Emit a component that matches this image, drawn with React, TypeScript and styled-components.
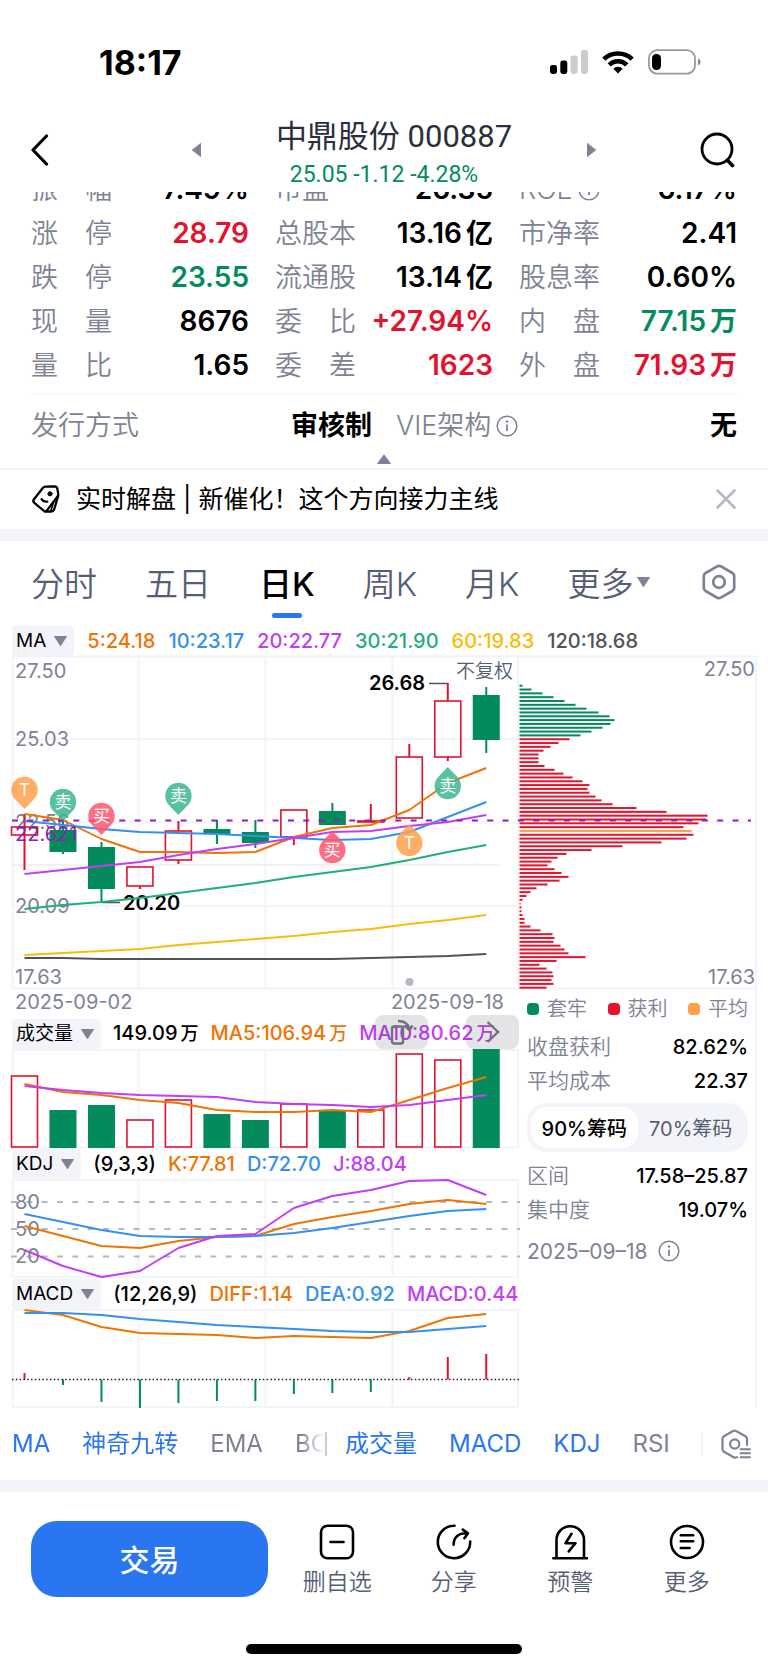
import React, { useState } from "react";
import styled, { createGlobalStyle, css } from "styled-components";

const c = {
  ink: "#000000",
  title: "#29303b",
  label: "#7e8394",
  slate: "#565e76",
  mute: "#b3b8c8",
  line: "#f3f4f9",
  red: "#e3122d",
  green: "#038b5d",
  blue: "#2a75f0",
  orange: "#ef7404",
  sky: "#3590ef",
  purple: "#c23df5",
  teal: "#1fae7c",
  yellow: "#f8bd0a",
  dark: "#525257",
  amber: "#ffa04a",
  violet: "#8c22b4",
};

const GlobalStyle = createGlobalStyle`
  *, *::before, *::after { box-sizing: border-box; }
  body {
    margin: 0;
    background: #fff;
    color: ${c.ink};
    font-family: Inter, "Noto Sans CJK SC", sans-serif;
  }
  button, select, input { font: inherit; color: inherit; }
  button { border: 0; padding: 0; background: none; }
  svg { display: block; flex: none; }
`;

/* ---------- icons ---------- */

const SignalIcon = () => (
  <svg width="38" height="26" viewBox="0 0 38 26">
    <rect x="0" y="16" width="7" height="9" rx="2.4" />
    <rect x="10.3" y="11.5" width="7" height="13.5" rx="2.4" />
    <rect x="20.6" y="6.500" width="7" height="18.5" rx="2.4" fill="#ccc" />
    <rect x="31" y="1" width="7" height="24" rx="2.4" fill="#ccc" />
  </svg>
);

const WifiIcon = () => (
  <svg width="32" height="26" viewBox="0 0 32 26" fill="none" stroke="#000" strokeWidth="4.6">
    <path d="M1.8 10.2a20.4 20.4 0 0 1 28.4 0" />
    <path d="M7.2 15.9a12.6 12.6 0 0 1 17.6 0" />
    <path d="M16 24.6l-4.6-4.9a6.6 6.6 0 0 1 9.2 0z" fill="#000" stroke="none" />
  </svg>
);

const BatteryIcon = () => (
  <svg width="53" height="26" viewBox="0 0 53 26">
    <rect x="1" y="1.2" width="46" height="23.4" rx="8" fill="none" stroke="#9a9a9a" strokeWidth="1.8" />
    <rect x="4" y="5" width="9" height="16" rx="4.2" />
    <path d="M50 9.6c3.4 1.2 3.4 5.600 0 6.800z" fill="#8a8a8a" />
  </svg>
);

const BackIcon = () => (
  <svg width="18" height="32" viewBox="0 0 18 32" fill="none" stroke="#000" strokeWidth="3.2" strokeLinecap="round" strokeLinejoin="round">
    <path d="M15.500 2L2 16l13.500 14" />
  </svg>
);

const SearchIcon = () => (
  <svg width="35" height="36" viewBox="0 0 35 36" fill="none" stroke="#000" strokeWidth="2.800" strokeLinecap="round">
    <circle cx="17" cy="17" r="15" />
    <path d="M27.500 28.500l5 5" strokeWidth="3.600" />
  </svg>
);

const Triangle = ({ dir, w, h }: { dir: "up" | "down" | "left" | "right"; w: number; h: number }) => {
  const d = {
    up: `M${w / 2} 0.500L${w} ${h}H0z`,
    down: `M0 0H${w}L${w / 2} ${h}z`,
    left: `M${w} 0V${h}L0 ${h / 2}z`,
    right: `M0 0V${h}L${w} ${h / 2}z`,
  }[dir];
  return (
    <svg width={w} height={h} viewBox={`0 0 ${w} ${h}`}>
      <path d={d} fill={c.label} stroke={c.label} strokeWidth="0.500" strokeLinejoin="round" />
    </svg>
  );
};

const InfoIcon = ({ size }: { size: number }) => (
  <svg width={size} height={size} viewBox="0 0 22 22" fill="none" stroke={c.label} strokeWidth="1.500">
    <circle cx="11" cy="11" r="9.800" />
    <path d="M11 9.500v6.500" strokeWidth="1.800" />
    <circle cx="11" cy="6.500" r="1.200" fill={c.label} stroke="none" />
  </svg>
);

const TagIcon = () => (
  <svg width="28" height="28" viewBox="0 0 28 28" fill="none" stroke="#000" strokeWidth="2.300" strokeLinejoin="round" strokeLinecap="round">
    <path d="M1.800 14.500L10.600 3.200Q11.800 1.700 13.800 1.600L22.600 1.300Q24.800 1.300 25.300 3.400L26.200 8.600Q26.500 10.500 25.200 12L14.800 25.600Q13.400 27 11.900 25.800L2.300 17.800Q0.600 16.200 1.800 14.500z" />
    <path d="M26.200 11L22.300 23.800Q21.500 26.400 18.800 26.500L13.500 26.600" />
    <path d="M18.800 26l2.600-8.500" strokeWidth="1.600" />
    <circle cx="18" cy="8.800" r="2.100" fill="#000" strokeWidth="1" />
    <path d="M9.600 14.200q1.800 3 5.600 2.400" />
  </svg>
);

const CloseIcon = () => (
  <svg width="20" height="20" viewBox="0 0 20 20" stroke={c.mute} strokeWidth="2.600" strokeLinecap="round">
    <path d="M1.500 1.500l17 17M18.500 1.500l-17 17" />
  </svg>
);

const HexIcon = () => (
  <svg width="34" height="36" viewBox="0 0 34 36" fill="none" stroke={c.label} strokeWidth="2.700" strokeLinejoin="round">
    <path d="M15.200 2.300q1.800-1 3.600 0L30.400 9q1.800 1 1.800 3v12q0 2-1.800 3l-11.600 6.700q-1.800 1-3.600 0L3.600 27q-1.800-1-1.800-3V12q0-2 1.800-3z" />
    <circle cx="17" cy="18" r="5.800" />
  </svg>
);

const HexListIcon = () => (
  <svg width="30" height="30" viewBox="0 0 30 30" fill="none" stroke={c.label} strokeWidth="2.200" strokeLinejoin="round" strokeLinecap="round">
    <path d="M16 28.200l-2.500.600L3 22.800q-1.500-.900-1.500-2.600V9.800Q1.500 8 3 7.200L12 2q1.500-.800 3 0l9.500 5.200Q26 8 26 9.800V16" />
    <circle cx="13.700" cy="15" r="4.600" />
    <path d="M19.500 20.200h9.500M19.500 24.200h9.500M19.500 28.200h9.500" strokeWidth="1.900" />
  </svg>
);

const RotateIcon = () => (
  <svg width="24" height="28" viewBox="0 0 24 28" fill="none" stroke="#707278" strokeWidth="2.400" strokeLinejoin="round">
    <rect x="2" y="8.500" width="11" height="17" rx="2" />
    <path d="M8 3q9.500 0 11.500 8M15.500 8.500l4 3.500 3-4.500" />
  </svg>
);

const ArrowIcon = () => (
  <svg width="14" height="24" viewBox="0 0 14 24" fill="none" stroke="#707278" strokeWidth="2.400">
    <path d="M1.500 2l10.500 10L1.500 22" />
  </svg>
);

const ActionSvg = ({ children }: { children: React.ReactNode }) => (
  <svg width="36" height="36" viewBox="0 0 36 36" fill="none" stroke="#000" strokeWidth="2.600" strokeLinecap="round" strokeLinejoin="round">
    {children}
  </svg>
);

const RemoveIcon = () => (
  <ActionSvg>
    <rect x="2" y="1.800" width="32" height="32.400" rx="6.500" />
    <path d="M11.500 18h13" />
  </ActionSvg>
);

const ShareIcon = () => (
  <ActionSvg>
    <path d="M18.500 1.800A16.200 16.200 0 1 0 34.200 17.600" />
    <path d="M17.600 20.800c0-8 5-11.800 13.400-11.600M26.800 5.600l5.200 3.600-3.600 5" />
  </ActionSvg>
);

const AlertIcon = () => (
  <ActionSvg>
    <path d="M4.500 33.500V16a13.500 13.500 0 0 1 27.500 0v17.500M1.300 34.200h34" />
    <path d="M19.500 9.800l-6 9.400h10l-6.800 8.200" />
  </ActionSvg>
);

const MoreIcon = () => (
  <ActionSvg>
    <circle cx="18" cy="18" r="16" />
    <path d="M11.800 11.300h12.400M11.800 17.300h12.400M11.800 24h8.800" />
  </ActionSvg>
);

/* ---------- top of the page ---------- */

const Page = styled.main`
  width: 100%;
  background: #fff;
`;

const StatusBar = styled.div`
  display: flex;
  align-items: center;
  justify-content: space-between;
  height: 110px;
  padding: 14px 67px 0 99px;
`;

const Clock = styled.time`
  font-size: 34px;
  font-weight: 700;
`;

const StatusIcons = styled.div`
  display: flex;
  gap: 14px;
`;

const Header = styled.header`
  display: grid;
  grid-template-columns: 161fr 404fr 139fr;
  grid-template-rows: 80px;
  align-items: center;
  height: 82px;
  padding: 0 33px 0 31px;
`;

const IconButton = styled.button<{ $end?: boolean }>`
  display: flex;
  align-items: center;
  justify-self: ${(p) => (p.$end ? "end" : "start")};
`;

const Pager = styled.div`
  display: flex;
  align-items: center;
  justify-content: space-between;
`;

const StockTitle = styled.div`
  padding-top: 10px;
  text-align: center;
  font-family: Roboto, "Noto Sans CJK SC", sans-serif;
`;

const StockName = styled.h1`
  margin: 0 0 2px;
  font-size: 31px;
  line-height: 38px;
  font-weight: 400;
  color: ${c.title};
`;

const StockPrice = styled.p`
  margin: 0;
  padding-right: 20px;
  font-size: 23px;
  line-height: 34px;
  color: ${c.green};
`;

const QuoteClip = styled.section`
  overflow: hidden;
  padding: 0 31px;
`;

const QuoteGrid = styled.dl`
  display: grid;
  grid-template-columns: repeat(3, minmax(0, 1fr));
  column-gap: 26px;
  margin: -25px 0 7px;
`;

const Quote = styled.div`
  display: flex;
  align-items: baseline;
  justify-content: space-between;
  height: 44px;
  line-height: 44px;
  white-space: nowrap;
`;

const QuoteLabel = styled.dt`
  display: flex;
  justify-content: space-between;
  min-width: 81px;
  gap: 5px;
  font-size: 27px;
  font-weight: 350;
  color: ${c.label};
  svg {
    align-self: center;
  }
`;

const QuoteValue = styled.dd<{ $color?: string }>`
  margin: 0;
  font-size: 28px;
  font-weight: 600;
  color: ${(p) => p.$color ?? c.ink};
`;

const QuoteUnit = styled.span<{ $spaced?: boolean }>`
  margin-left: ${(p) => (p.$spaced ? 4 : 0)}px;
  font-size: 27px;
`;

const IssueRow = styled.dl`
  display: grid;
  grid-template-columns: repeat(2, minmax(0, 1fr));
  column-gap: 24px;
  height: 60px;
  margin: 0;
  align-items: center;
  border-top: 1px solid ${c.line};
`;

const Collapse = styled.button`
  display: flex;
  justify-content: center;
  width: 100%;
  height: 16px;
  border-bottom: 2px solid ${c.line};
`;

const Banner = styled.aside`
  display: flex;
  align-items: center;
  gap: 16px;
  height: 59px;
  padding: 0 32px 2px;
`;

const BannerLink = styled.a`
  flex: 1;
  font-size: 25px;
  line-height: 36px;
  color: ${c.ink};
  text-decoration: none;
`;

const Band = styled.div`
  height: 12px;
  background: ${c.line};
`;

const Tabs = styled.nav`
  display: flex;
  align-items: center;
  justify-content: space-between;
  height: 84px;
  padding: 0 32px 2px 31px;
`;

const TabList = styled.div`
  display: flex;
  gap: 48px;
`;

const Tab = styled.button<{ $active?: boolean }>`
  position: relative;
  display: flex;
  align-items: center;
  gap: 4px;
  height: 84px;
  font-size: 33px;
  font-weight: ${(p) => (p.$active ? 500 : 350)};
  color: ${(p) => (p.$active ? c.ink : c.slate)};
  ${(p) =>
    p.$active &&
    css`
      &::after {
        content: "";
        position: absolute;
        left: 50%;
        bottom: 6px;
        width: 30px;
        height: 5px;
        margin-left: -15px;
        border-radius: 3px;
        background: ${c.blue};
      }
    `}
`;

/* ---------- charts ---------- */

const ChartArea = styled.section`
  padding: 0 11px 0 12px;
`;

const Legend = styled.div<{ $gap?: number }>`
  position: relative;
  display: flex;
  align-items: center;
  gap: ${(p) => p.$gap ?? 12}px;
  height: 31px;
  font-size: 20px;
  font-weight: 500;
  line-height: 30px;
  white-space: nowrap;
`;

const Chip = styled.label`
  position: relative;
  display: flex;
  align-items: center;
  height: 30px;
  border-radius: 4px;
  background: ${c.line};
  svg {
    position: absolute;
    right: 7px;
    pointer-events: none;
  }
`;

const ChipSelect = styled.select`
  appearance: none;
  field-sizing: content;
  border: 0;
  height: 30px;
  padding: 0 28px 0 4px;
  background: transparent;
  font-size: 19px;
  font-weight: 400;
`;

const Reading = styled.span<{ $color?: string }>`
  color: ${(p) => p.$color ?? c.ink};
`;

const ReadingUnit = styled.span`
  margin-left: 3px;
  font-size: 18px;
`;

const ChartSvg = styled.svg`
  width: 100%;
  height: auto;
  overflow: visible;
  font-size: 20px;
`;

const Columns = styled.div`
  display: grid;
  grid-template-columns: 507fr 238fr;
`;

const Dates = styled.div`
  display: flex;
  justify-content: space-between;
  height: 29px;
  padding: 0 15px 0 3px;
  font-size: 20px;
  line-height: 26px;
  color: ${c.label};
`;

const FloatButton = styled.button<{ $right: number }>`
  position: absolute;
  top: -3px;
  right: ${(p) => p.$right}px;
  display: flex;
  align-items: center;
  justify-content: center;
  width: 53px;
  height: 34px;
  border-radius: 8px;
  background: rgba(60, 66, 80, 0.14);
`;

const SidePanel = styled.div`
  padding: 0 7px 0 8px;
  border-right: 2px solid ${c.line};
  font-size: 20px;
`;

const Keys = styled.div`
  display: flex;
  justify-content: space-between;
  align-items: center;
  height: 40px;
  margin-bottom: 1px;
  color: ${c.label};
  font-weight: 350;
  line-height: 28px;
`;

const Key = styled.span<{ $color: string }>`
  display: flex;
  align-items: center;
  gap: 8px;
  &::before {
    content: "";
    width: 12px;
    height: 12px;
    border-radius: 4px;
    background: ${(p) => p.$color};
  }
`;

const Stats = styled.dl`
  margin: 0;
`;

const Stat = styled.div`
  display: flex;
  align-items: baseline;
  justify-content: space-between;
  height: 34px;
  line-height: 34px;
  dt {
    color: ${c.label};
    font-size: 21px;
    font-weight: 350;
  }
  dd {
    margin: 0;
    font-weight: 500;
  }
`;

const Segmented = styled.fieldset`
  display: flex;
  margin: 5px 0 7px;
  padding: 4px;
  height: 49px;
  border: 0;
  border-radius: 20px;
  background: ${c.line};
`;

const Segment = styled.label`
  flex: 1;
  display: flex;
  align-items: center;
  justify-content: center;
  border-radius: 16px;
  white-space: nowrap;
  color: ${c.slate};
  input {
    position: absolute;
    opacity: 0;
    pointer-events: none;
  }
  &:has(input:checked) {
    background: #fff;
    color: ${c.ink};
    font-weight: 500;
  }
`;

const PanelDate = styled.p`
  display: flex;
  align-items: center;
  gap: 11px;
  height: 48px;
  margin: 0;
  font-size: 21px;
  color: ${c.label};
`;

/* ---------- bottom of the page ---------- */

const IndicatorBar = styled.nav`
  display: flex;
  align-items: center;
  height: 72px;
  padding: 0 17px 0 12px;
`;

const IndicatorList = styled.div<{ $grow: number; $fade?: boolean }>`
  flex: ${(p) => p.$grow} 1 0;
  display: flex;
  gap: 32px;
  min-width: 0;
  overflow: hidden;
  ${(p) => p.$fade && "mask-image: linear-gradient(to left, transparent 0, #000 24px);"}
`;

const Indicator = styled.button<{ $on?: boolean }>`
  flex: none;
  font-size: 24px;
  line-height: 36px;
  color: ${(p) => (p.$on ? c.blue : c.label)};
`;

const Divider = styled.i<{ $soft?: boolean }>`
  width: 2px;
  height: 24px;
  margin-right: 18px;
  background: ${(p) => (p.$soft ? c.line : "#c9ccd6")};
`;

const Footer = styled.footer`
  display: flex;
  padding: 29px 23px 0 31px;
`;

const TradeButton = styled.button`
  flex: 237 1 0;
  height: 76px;
  margin-right: 11px;
  padding-bottom: 3px;
  border-radius: 26px;
  background: ${c.blue};
  color: #fff;
  font-size: 30px;
  font-weight: 500;
`;

const Actions = styled.div`
  flex: 466 1 0;
  display: grid;
  grid-template-columns: repeat(4, 1fr);
`;

const Action = styled.button`
  display: flex;
  flex-direction: column;
  align-items: center;
  gap: 7px;
  padding-top: 3px;
  font-size: 23px;
  line-height: 30px;
  font-weight: 350;
  color: ${c.slate};
`;

const HomeBar = styled.div`
  width: 36%;
  height: 10px;
  margin: 47px auto 16px;
  border-radius: 5px;
  background: #000;
`;

/* ---------- data ---------- */

type QuoteItem = { label: string; value: string; unit?: string; color?: string; info?: boolean };

const quotes: QuoteItem[] = [
  { label: "振幅", value: "7.49%" },
  { label: "市盈", value: "26.35" },
  { label: "ROE", value: "6.17%", info: true },
  { label: "涨停", value: "28.79", color: c.red },
  { label: "总股本", value: "13.16", unit: "亿" },
  { label: "市净率", value: "2.41" },
  { label: "跌停", value: "23.55", color: c.green },
  { label: "流通股", value: "13.14", unit: "亿" },
  { label: "股息率", value: "0.60%" },
  { label: "现量", value: "8676" },
  { label: "委比", value: "+27.94%", color: c.red },
  { label: "内盘", value: "77.15", unit: "万", color: c.green },
  { label: "量比", value: "1.65" },
  { label: "委差", value: "1623", color: c.red },
  { label: "外盘", value: "71.93", unit: "万", color: c.red },
];

const spread = ["涨停", "跌停", "现量", "量比", "委比", "委差", "内盘", "外盘", "振幅"];

const periods = ["分时", "五日", "日K", "周K", "月K"];

const STEP = 38.48;
const cx = (i: number) => 12.5 + STEP * i;
const BODY = 27;

// [hollow red, body top, body bottom, wick top, wick bottom]
const candles: [boolean, number, number, number, number][] = [
  [true, 171, 179, 158, 214],
  [false, 175, 195, 165, 198],
  [false, 192, 232, 186, 246],
  [true, 211, 230, 211, 233],
  [true, 175, 204, 165, 208],
  [false, 174, 177, 164, 188],
  [false, 177, 186, 164, 192],
  [true, 154, 181, 154, 189],
  [false, 156, 168, 147, 169],
  [true, 165, 166, 148, 166],
  [true, 101, 162, 88, 162],
  [true, 45, 101, 27, 105],
  [false, 40, 83, 31, 97],
];

const averages: [string, number[]][] = [
  [c.dark, [302, 302, 303, 303, 303, 303, 303, 303, 303, 302, 301, 300, 298]],
  [c.yellow, [299, 297, 295, 293, 289, 286, 283, 280, 276, 273, 268, 264, 259]],
  [c.teal, [253, 249, 246, 242, 237, 232, 227, 221, 216, 211, 204, 196, 189]],
  [c.orange, [158, 164, 183, 196, 196, 197, 196, 181, 172, 169, 154, 127, 112]],
  [c.sky, [165, 169, 173, 176, 177, 178, 180, 182, 184, 183, 176, 161, 146]],
  [c.purple, [218, 214, 210, 206, 199, 193, 188, 182, 176, 175, 170, 166, 159]],
];

const markers: { i: number; tip: number; text: string; color: string; up?: boolean }[] = [
  { i: 0, tip: 153, text: "T", color: c.amber },
  { i: 1, tip: 165, text: "卖", color: "#3bb78f" },
  { i: 2, tip: 179, text: "买", color: "#ff566e" },
  { i: 4, tip: 159, text: "卖", color: "#3bb78f" },
  { i: 8, tip: 175, text: "买", color: "#ff566e", up: true },
  { i: 10, tip: 168, text: "T", color: c.amber, up: true },
  { i: 11, tip: 111, text: "卖", color: "#3bb78f", up: true },
];

const chipBars = [
  3, 12, 23, 34, 45, 56, 67, 79, 90, 95, 91, 83, 72, 61, 50, 39, 31, 24, 19, 19, 19, 25, 35, 44, 53, 63, 70, 68, 70, 76,
  82, 93, 117, 147, 188, 187, 179, 164, 172, 174, 167, 142, 103, 72, 47, 38, 32, 28, 35, 42, 49, 40, 28, 17, 11, 7, 3,
  1, 2, 2, 3, 5, 5, 11, 21, 33, 35, 34, 41, 45, 49, 66, 37, 20, 27, 33, 34, 32, 34, 27,
];

const volumes: [boolean, number][] = [
  [true, 26], [false, 60], [false, 55], [true, 70], [true, 50], [false, 64], [false, 70],
  [true, 54], [false, 61], [true, 60], [true, 4], [true, 10], [false, -1],
];

const volumeLines: [string, number[]][] = [
  [c.orange, [34, 42, 45, 50, 53, 60, 62, 62, 60, 62, 50, 38, 27]],
  [c.purple, [36, 40, 43, 45, 46, 47, 52, 54, 55, 57, 55, 50, 45]],
];

const kdjLines: [string, number[]][] = [
  [c.orange, [46, 56, 66, 68, 61, 57, 56, 44, 37, 31, 24, 20, 24]],
  [c.sky, [34, 42, 50, 56, 57, 57, 56, 53, 48, 42, 36, 31, 29]],
  [c.purple, [70, 86, 97, 91, 68, 56, 54, 28, 16, 10, 1, 0, 15]],
];

const macdLines: [string, number[]][] = [
  [c.orange, [0, 5, 17, 23, 24, 25, 28, 26, 27, 28, 21, 8, 4]],
  [c.sky, [3, 3, 5, 9, 12, 15, 17, 19, 21, 22, 22, 19, 16]],
];

const macdBars = [63, 75, 92, 98, 93, 91, 91, 84, 83, 82, 67, 47, 44];

/* ---------- chart parts ---------- */

const Line = ({ color, ys }: { color: string; ys: number[] }) => (
  <polyline
    points={ys.map((y, i) => `${cx(i)},${y}`).join(" ")}
    fill="none"
    stroke={color}
    strokeWidth="1.900"
    strokeLinejoin="round"
  />
);

const Marker = ({ i, tip, text, color, up }: (typeof markers)[number]) => {
  const s = up ? 1 : -1;
  const x = cx(i);
  const mid = tip + s * 19;
  return (
    <g>
      <path
        d={`M${x} ${tip}L${x + 9.600} ${mid - s * 9}A13.200 13.200 0 1 ${up ? 1 : 0} ${x - 9.600} ${mid - s * 9}z`}
        fill={color}
        fillOpacity="0.850"
      />
      <text x={x} y={mid + 6} textAnchor="middle" fill="#fff" fontSize="17">
        {text}
      </text>
    </g>
  );
};

const Frame = ({ top, bottom }: { top: number; bottom: number }) => (
  <path
    d={`M0.500 ${top}H506V${bottom}H0.500zM126.500 ${top}V${bottom}M253.500 ${top}V${bottom}M380.500 ${top}V${bottom}`}
    fill="none"
    stroke={c.line}
    strokeWidth="2"
  />
);

const PriceChart = () => (
  <ChartSvg viewBox="0 0 745 333" role="img" aria-label="日K线与筹码分布">
    <Frame top={0.5} bottom={332.5} />
    <path d="M506 0.500H744V332.500H506M0 83H506M0 166.500H744M0 250H506" fill="none" stroke={c.line} strokeWidth="2" />
    <path d="M0 209H487" stroke="#ededee" strokeWidth="1.500" />
    {chipBars.map((w, k) => (
      <rect
        key={k}
        x="507.500"
        y={28.700 + 3.823 * k}
        width={w}
        height="2"
        fill={k < 14 ? c.green : k === 38 ? c.amber : c.red}
      />
    ))}
    <g fill={c.label}>
      <text x="3" y="22">27.50</text>
      <text x="3" y="90">25.03</text>
      <text x="3" y="173">22.56</text>
      <text x="3" y="257">20.09</text>
      <text x="3" y="328">17.63</text>
      <text x="743" y="20" textAnchor="end">27.50</text>
      <text x="743" y="328" textAnchor="end">17.63</text>
    </g>
    <text x="501" y="22" textAnchor="end" fill={c.slate} fontSize="19" fontWeight="350">不复权</text>
    {candles.map(([up, top, bottom, high, low], i) => (
      <g key={i} stroke={up ? c.red : c.green} strokeWidth="2">
        <path d={`M${cx(i)} ${high}V${top}M${cx(i)} ${bottom}V${low}`} />
        {i === 0 && <path d={`M${cx(i)} ${top}V${bottom}`} />}
        <rect
          x={cx(i) - BODY / 2 + (up ? 0.500 : 1)}
          y={top}
          width={BODY - (up ? 1 : 2)}
          height={bottom - top}
          fill={up ? "none" : c.green}
          strokeWidth={up ? 1.600 : 2}
        />
      </g>
    ))}
    <path d="M90 246.500H108M417 27.500H436" stroke="#555" strokeWidth="1.300" />
    <g fontWeight="600">
      <text x="413" y="34" textAnchor="end">26.68</text>
      <text x="111" y="254">20.20</text>
    </g>
    {averages.map(([color, ys]) => (
      <Line key={color} color={color} ys={ys} />
    ))}
    <path d="M0 164.500H739" stroke={c.violet} strokeWidth="1.800" strokeDasharray="6 9.330" />
    <text x="3" y="185" fill={c.violet}>22.621</text>
    {markers.map((m) => (
      <Marker key={m.i} {...m} />
    ))}
    <circle cx="397.500" cy="326" r="4" fill={c.mute} />
  </ChartSvg>
);

const VolumeChart = () => (
  <ChartSvg viewBox="0 -1 507 99" role="img" aria-label="成交量">
    <Frame top={0} bottom={97.5} />
    {volumes.map(([up, top], i) =>
      up ? (
        <rect key={i} x={cx(i) - 13} y={top} width="26" height={97 - top} fill="#fff" stroke={c.red} strokeWidth="1.600" />
      ) : (
        <rect key={i} x={cx(i) - 13.500} y={top} width="27" height={98 - top} fill={c.green} />
      )
    )}
    {volumeLines.map(([color, ys]) => (
      <Line key={color} color={color} ys={ys} />
    ))}
  </ChartSvg>
);

const KdjChart = () => (
  <ChartSvg viewBox="0 -1 507 99" role="img" aria-label="KDJ">
    <Frame top={0} bottom={97} />
    <path d="M-1 22H508M-1 49H508M-1 76.500H508" stroke={c.mute} strokeWidth="1.800" strokeDasharray="6 9.330" />
    <g fill={c.label}>
      <text x="3" y="29">80</text>
      <text x="3" y="56">50</text>
      <text x="3" y="83">20</text>
    </g>
    {kdjLines.map(([color, ys]) => (
      <Line key={color} color={color} ys={ys} />
    ))}
  </ChartSvg>
);

const MacdChart = () => (
  <ChartSvg viewBox="0 -1 507 99" role="img" aria-label="MACD">
    <Frame top={0} bottom={97} />
    {macdBars.map((y, i) => (
      <path key={i} d={`M${cx(i)} 69.500V${y}`} stroke={y < 69 ? c.red : c.green} strokeWidth="2" />
    ))}
    <path d="M0 69.500H507" stroke="#222" strokeWidth="1.500" strokeDasharray="1.500 2.300" />
    {macdLines.map(([color, ys]) => (
      <Line key={color} color={color} ys={ys} />
    ))}
  </ChartSvg>
);

const IndicatorSelect = ({ name }: { name: string }) => (
  <Chip>
    <ChipSelect aria-label={`指标 ${name}`} defaultValue={name}>
      <option>{name}</option>
    </ChipSelect>
    <Triangle dir="down" w={13} h={10} />
  </Chip>
);

export default function App() {
  const [period, setPeriod] = useState("日K");
  return (
    <Page>
      <GlobalStyle />
      <StatusBar>
        <Clock>18:17</Clock>
        <StatusIcons>
          <SignalIcon />
          <WifiIcon />
          <BatteryIcon />
        </StatusIcons>
      </StatusBar>

      <Header>
        <IconButton aria-label="返回"><BackIcon /></IconButton>
        <Pager>
          <IconButton aria-label="上一只"><Triangle dir="left" w={9} h={14} /></IconButton>
          <StockTitle>
            <StockName>中鼎股份 000887</StockName>
            <StockPrice>25.05 -1.12 -4.28%</StockPrice>
          </StockTitle>
          <IconButton aria-label="下一只"><Triangle dir="right" w={9} h={14} /></IconButton>
        </Pager>
        <IconButton $end aria-label="搜索"><SearchIcon /></IconButton>
      </Header>

      <QuoteClip>
        <QuoteGrid>
          {quotes.map((q) => (
            <Quote key={q.label}>
              <QuoteLabel>
                {spread.includes(q.label) ? [...q.label].map((ch) => <span key={ch}>{ch}</span>) : <span>{q.label}</span>}
                {q.info && <InfoIcon size={22} />}
              </QuoteLabel>
              <QuoteValue $color={q.color}>
                {q.value}
                {q.unit && <QuoteUnit $spaced>{q.unit}</QuoteUnit>}
              </QuoteValue>
            </Quote>
          ))}
        </QuoteGrid>
        <IssueRow>
          <Quote>
            <QuoteLabel>发行方式</QuoteLabel>
            <QuoteValue><QuoteUnit>审核制</QuoteUnit></QuoteValue>
          </Quote>
          <Quote>
            <QuoteLabel>VIE架构 <InfoIcon size={22} /></QuoteLabel>
            <QuoteValue><QuoteUnit>无</QuoteUnit></QuoteValue>
          </Quote>
        </IssueRow>
      </QuoteClip>
      <Collapse aria-label="收起"><Triangle dir="up" w={14} h={10} /></Collapse>

      <Banner>
        <TagIcon />
        <BannerLink href="#live">实时解盘 | 新催化！这个方向接力主线</BannerLink>
        <IconButton aria-label="关闭"><CloseIcon /></IconButton>
      </Banner>
      <Band />

      <Tabs>
        <TabList>
          {periods.map((p) => (
            <Tab key={p} $active={p === period} onClick={() => setPeriod(p)}>
              {p}
            </Tab>
          ))}
          <Tab>
            更多
            <Triangle dir="down" w={13} h={10} />
          </Tab>
        </TabList>
        <IconButton aria-label="图表设置"><HexIcon /></IconButton>
      </Tabs>

      <ChartArea>
        <Legend $gap={13}>
          <IndicatorSelect name="MA" />
          <Reading $color={c.orange}>5:24.18</Reading>
          <Reading $color={c.sky}>10:23.17</Reading>
          <Reading $color={c.purple}>20:22.77</Reading>
          <Reading $color={c.teal}>30:21.90</Reading>
          <Reading $color={c.yellow}>60:19.83</Reading>
          <Reading $color={c.dark}>120:18.68</Reading>
        </Legend>
        <PriceChart />
        <Columns>
          <div>
            <Dates>
              <span>2025-09-02</span>
              <span>2025-09-18</span>
            </Dates>
            <Legend>
              <IndicatorSelect name="成交量" />
              <Reading>149.09<ReadingUnit>万</ReadingUnit></Reading>
              <Reading $color={c.orange}>MA5:106.94<ReadingUnit>万</ReadingUnit></Reading>
              <Reading $color={c.purple}>MA10:80.62<ReadingUnit>万</ReadingUnit></Reading>
              <FloatButton $right={91} aria-label="横屏"><RotateIcon /></FloatButton>
              <FloatButton $right={0} aria-label="下一组"><ArrowIcon /></FloatButton>
            </Legend>
            <VolumeChart />
            <Legend>
              <IndicatorSelect name="KDJ" />
              <Reading>(9,3,3)</Reading>
              <Reading $color={c.orange}>K:77.81</Reading>
              <Reading $color={c.sky}>D:72.70</Reading>
              <Reading $color={c.purple}>J:88.04</Reading>
            </Legend>
            <KdjChart />
            <Legend>
              <IndicatorSelect name="MACD" />
              <Reading>(12,26,9)</Reading>
              <Reading $color={c.orange}>DIFF:1.14</Reading>
              <Reading $color={c.sky}>DEA:0.92</Reading>
              <Reading $color={c.purple}>MACD:0.44</Reading>
            </Legend>
            <MacdChart />
          </div>
          <SidePanel>
            <Keys>
              <Key $color={c.green}>套牢</Key>
              <Key $color={c.red}>获利</Key>
              <Key $color={c.amber}>平均</Key>
            </Keys>
            <Stats>
              <Stat><dt>收盘获利</dt><dd>82.62%</dd></Stat>
              <Stat><dt>平均成本</dt><dd>22.37</dd></Stat>
            </Stats>
            <Segmented aria-label="筹码范围">
              <Segment><input type="radio" name="chips" defaultChecked />90%筹码</Segment>
              <Segment><input type="radio" name="chips" />70%筹码</Segment>
            </Segmented>
            <Stats>
              <Stat><dt>区间</dt><dd>17.58–25.87</dd></Stat>
              <Stat><dt>集中度</dt><dd>19.07%</dd></Stat>
            </Stats>
            <PanelDate>2025–09–18 <InfoIcon size={22} /></PanelDate>
          </SidePanel>
        </Columns>
      </ChartArea>

      <IndicatorBar>
        <IndicatorList $grow={314} $fade>
          <Indicator $on>MA</Indicator>
          <Indicator $on>神奇九转</Indicator>
          <Indicator>EMA</Indicator>
          <Indicator>BOLL</Indicator>
        </IndicatorList>
        <Divider />
        <IndicatorList $grow={357}>
          <Indicator $on>成交量</Indicator>
          <Indicator $on>MACD</Indicator>
          <Indicator $on>KDJ</Indicator>
          <Indicator>RSI</Indicator>
        </IndicatorList>
        <Divider $soft />
        <IconButton aria-label="指标设置"><HexListIcon /></IconButton>
      </IndicatorBar>
      <Band />

      <Footer>
        <TradeButton>交易</TradeButton>
        <Actions>
          <Action><RemoveIcon />删自选</Action>
          <Action><ShareIcon />分享</Action>
          <Action><AlertIcon />预警</Action>
          <Action><MoreIcon />更多</Action>
        </Actions>
      </Footer>
      <HomeBar />
    </Page>
  );
}
